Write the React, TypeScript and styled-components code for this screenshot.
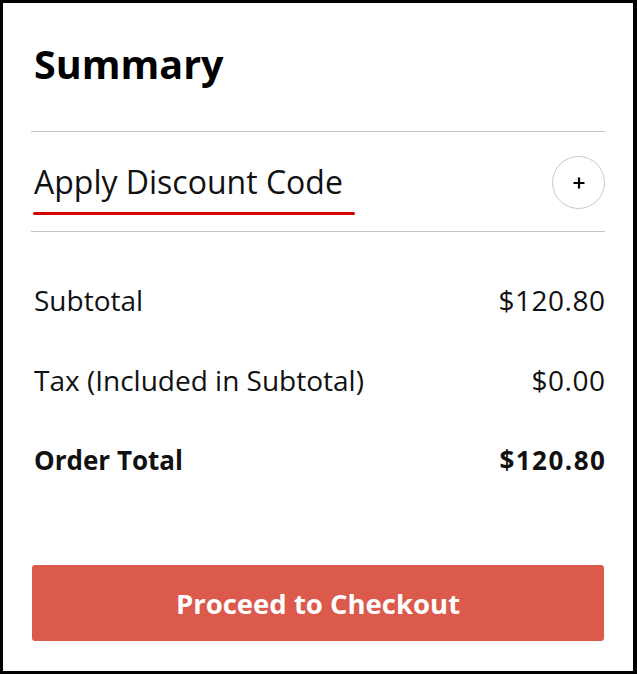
import React from "react";
import styled, { createGlobalStyle } from "styled-components";

const GlobalStyle = createGlobalStyle`
  html, body { margin: 0; padding: 0; background: #fff; }
  body { font-family: "Open Sans", Lato, sans-serif; color: #111; }
`;

const Card = styled.div`
  box-sizing: border-box;
  width: 637px;
  height: 674px;
  border: 3px solid #000;
  border-right-width: 4px;
  padding: 0 28px;
  display: flex;
  flex-direction: column;
`;

const Title = styled.h1`
  margin: 38px 0 0;
  padding-left: 3px;
  height: 90px;
  font-size: 39.5px;
  line-height: 47px;
  font-weight: 700;
  color: #000;
`;

const DiscountRow = styled.div`
  display: flex;
  align-items: center;
  justify-content: space-between;
  height: 99px;
  border-top: 1px solid #c4c4c4;
  border-bottom: 1px solid #c4c4c4;
`;

const DiscountLabel = styled.div`
  align-self: flex-start;
  display: flex;
  flex-direction: column;
  padding-left: 3px;
  padding-top: 32px;
`;

const LabelText = styled.span`
  font-size: 32px;
  line-height: 36px;
  color: #111;
`;

const Underline = styled.span`
  display: block;
  width: 322px;
  height: 3px;
  margin-left: -1px;
  margin-top: 12px;
  border-radius: 2px;
  background: #d40000;
`;

const CircleButton = styled.button`
  box-sizing: border-box;
  width: 53px;
  height: 53px;
  margin-top: 2px;
  border-radius: 50%;
  border: 1px solid #c8c8c8;
  background: #fff;
  display: flex;
  align-items: center;
  justify-content: center;
  padding: 0;
  color: #000;
`;

const Rows = styled.div`
  display: flex;
  flex-direction: column;
  padding-top: 28px;
`;

const Row = styled.div<{ $bold?: boolean }>`
  display: flex;
  justify-content: space-between;
  align-items: center;
  height: 80px;
  padding-left: 3px;
  font-size: ${(p) => (p.$bold ? 26 : 28)}px;
  font-weight: ${(p) => (p.$bold ? 700 : 400)};
  color: #111;
`;

const Amount = styled.span<{ $spacing: number }>`
  letter-spacing: ${(p) => p.$spacing}px;
  margin-right: -${(p) => p.$spacing}px;
`;

const Spacer = styled.div`
  flex: 1;
`;

const CheckoutButton = styled.button`
  margin: 0 1px 30px;
  height: 76px;
  border: none;
  border-radius: 3px;
  background: #db5a4b;
  color: #fff;
  font-family: "Open Sans", Lato, sans-serif;
  font-size: 27.5px;
  font-weight: 700;
`;

const PlusIcon = () => (
  <svg width="12" height="12" viewBox="0 0 12 12" aria-hidden="true">
    <path d="M6 0.5v11M0.5 6h11" stroke="#000" strokeWidth="2.2" />
  </svg>
);

export default function App() {
  return (
    <>
      <GlobalStyle />
      <Card>
        <Title>Summary</Title>
        <DiscountRow>
          <DiscountLabel>
            <LabelText>Apply Discount Code</LabelText>
            <Underline />
          </DiscountLabel>
          <CircleButton aria-label="Add discount code">
            <PlusIcon />
          </CircleButton>
        </DiscountRow>
        <Rows>
          <Row>
            <span>Subtotal</span>
            <Amount $spacing={0.5}>$120.80</Amount>
          </Row>
          <Row>
            <span>Tax (Included in Subtotal)</span>
            <Amount $spacing={0.5}>$0.00</Amount>
          </Row>
          <Row $bold>
            <span>Order Total</span>
            <Amount $spacing={1.5}>$120.80</Amount>
          </Row>
        </Rows>
        <Spacer />
        <CheckoutButton>Proceed to Checkout</CheckoutButton>
      </Card>
    </>
  );
}
